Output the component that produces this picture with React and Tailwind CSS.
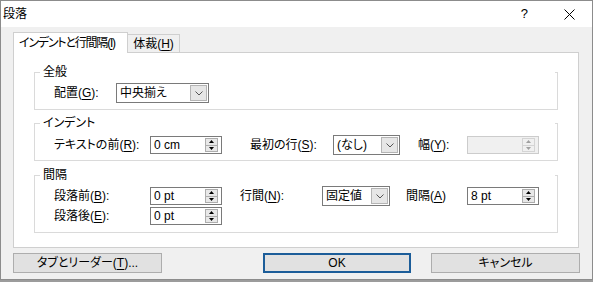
import React from 'react';

const Key = ({ children }) => <span className="underline underline-offset-2">{children}</span>;

const Chevron = ({ color = '#555' }) => (
  <svg width="8" height="5" viewBox="0 0 8 5">
    <path d="M0.5 0.5 L4 4 L7.5 0.5" fill="none" stroke={color} strokeWidth="1" />
  </svg>
);

const Dropdown = ({ value, width }) => (
  <div className={`flex h-[20px] border border-[#7a7a7a] bg-white ${width}`}>
    <span className="flex-1 pl-[3px] leading-[18px]">{value}</span>
    <span className="m-px flex w-[17px] items-center justify-center border border-[#b4b4b4] bg-[#e6e6e6]">
      <Chevron />
    </span>
  </div>
);

const Spin = ({ value, disabled }) => {
  const fill = disabled ? '#a0a0a0' : '#000';
  return (
    <div
      className={`flex h-[18px] w-[72px] items-center border ${
        disabled ? 'border-[#cccccc] bg-[#f0f0f0]' : 'border-[#7a7a7a] bg-white'
      }`}
    >
      <span className="flex-1 pl-[3px] leading-[16px]">{value}</span>
      <span
        className={`mr-[3px] flex h-[14px] w-[13px] flex-col border ${
          disabled ? 'border-[#d4d4d4] bg-[#f0f0f0]' : 'border-[#adadad] bg-[#e8e8e8]'
        }`}
      >
        <span className={`flex flex-1 items-center justify-center border-b ${disabled ? 'border-[#d4d4d4]' : 'border-[#adadad]'}`}>
          <svg width="5" height="3" viewBox="0 0 5 3">
            <path d="M2.5 0 L5 3 L0 3 Z" fill={fill} />
          </svg>
        </span>
        <span className="flex flex-1 items-center justify-center">
          <svg width="5" height="3" viewBox="0 0 5 3">
            <path d="M0 0 L5 0 L2.5 3 Z" fill={fill} />
          </svg>
        </span>
      </span>
    </div>
  );
};

const Group = ({ title, className, children }) => (
  <div className={`flex flex-col border-x border-b border-[#dadada] ${className}`}>
    <div className="-mt-[8px] flex h-[16px] items-center">
      <span className="h-px w-[5px] bg-[#dadada]" />
      <span className="ml-[3px] leading-[16px]">{title}</span>
      <span className="ml-auto h-px w-[2px] bg-[#dadada]" />
    </div>
    {children}
  </div>
);

const Button = ({ children, width, primary }) => (
  <button
    className={`flex h-[20px] items-center justify-center bg-[#e1e1e1] ${width} ${
      primary ? 'border-2 border-[#1c5d99]' : 'border border-[#adadad]'
    }`}
  >
    {children}
  </button>
);

export default function App() {
  return (
    <div className="h-[282px] w-[593px] overflow-hidden bg-[#9c9c9c]">
      <div className="flex h-[280px] flex-col border border-[#8c8c8c] bg-[#f0f0f0] font-['Liberation_Sans','Noto_Sans_CJK_JP',sans-serif] text-[12px] text-black [font-feature-settings:'palt']">
        <div className="flex h-[26px] items-center bg-white pl-[2px]">
          <span>段落</span>
          <span className="ml-auto text-[13px]">?</span>
          <span className="ml-[36px] mr-[17px] flex">
            <svg width="11" height="11" viewBox="0 0 11 11">
              <path d="M0.5 0.5 L10.5 10.5 M10.5 0.5 L0.5 10.5" stroke="#000" strokeWidth="1" />
            </svg>
          </span>
        </div>

        <div className="flex flex-1 flex-col px-[12px] pt-[5px]">
          <div className="flex h-[20px] items-end">
            <div className="relative z-10 -mb-px flex h-[21px] w-[115px] items-center border border-b-0 border-[#cfcfcf] bg-white pl-[5px] tracking-[-1.2px]">
              インデントと行間隔(<Key>I</Key>)
            </div>
            <div className="flex h-[18px] w-[52px] items-center justify-center border border-b-0 border-l-0 border-[#cfcfcf] bg-[#f0f0f0]">
              体裁(<Key>H</Key>)
            </div>
          </div>

          <div className="flex h-[196px] w-[566px] flex-col border border-[#cfcfcf] bg-white px-[20px] pt-[19px]">
            <Group title="全般" className="pb-[6px]">
              <div className="mt-[3px] flex h-[20px] items-center pl-[19px]">
                <span className="w-[62px]">
                  配置(<Key>G</Key>):
                </span>
                <Dropdown value="中央揃え" width="w-[93px]" />
              </div>
            </Group>

            <Group title="インデント" className="mt-[13px] pb-[5px]">
              <div className="mt-[4px] flex h-[20px] items-center pl-[19px]">
                <span className="w-[96px]">
                  テキストの前(<Key>R</Key>):
                </span>
                <Spin value="0 cm" />
                <span className="w-[111px] pl-[28px]">
                  最初の行(<Key>S</Key>):
                </span>
                <Dropdown value="(なし)" width="w-[67px]" />
                <span className="w-[67px] pl-[18px]">
                  幅(<Key>Y</Key>):
                </span>
                <Spin value="" disabled />
              </div>
            </Group>

            <Group title="間隔" className="mt-[14px] pb-[6px]">
              <div className="mt-[3px] flex h-[20px] items-center pl-[19px]">
                <span className="w-[96px]">
                  段落前(<Key>B</Key>):
                </span>
                <Spin value="0 pt" />
                <span className="w-[100px] pl-[18px]">
                  行間(<Key>N</Key>):
                </span>
                <Dropdown value="固定値" width="w-[68px]" />
                <span className="w-[77px] pl-[16px]">
                  間隔(<Key>A</Key>)
                </span>
                <Spin value="8 pt" />
              </div>
              <div className="flex h-[20px] items-center pl-[19px]">
                <span className="w-[96px]">
                  段落後(<Key>E</Key>):
                </span>
                <Spin value="0 pt" />
              </div>
            </Group>
          </div>

          <div className="mt-[5px] flex">
            <Button width="w-[149px]">
              タブとリーダー(<Key>T</Key>)...
            </Button>
            <div className="ml-[101px]">
              <Button width="w-[148px]" primary>
                OK
              </Button>
            </div>
            <div className="ml-[20px]">
              <Button width="w-[149px]">キャンセル</Button>
            </div>
          </div>
        </div>
      </div>
    </div>
  );
}
